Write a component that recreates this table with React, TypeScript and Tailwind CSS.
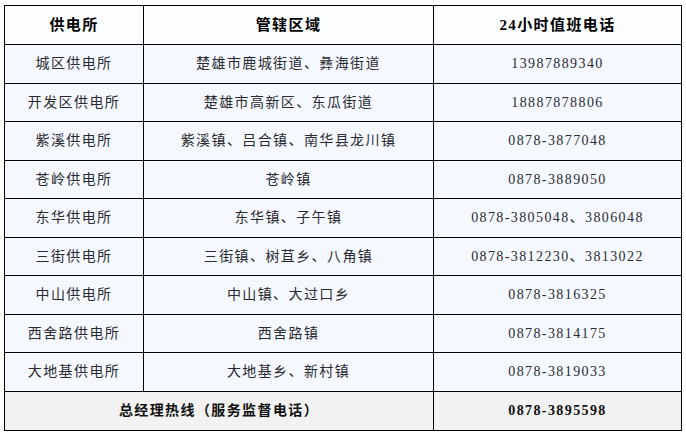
const rows = [
  ["城区供电所", "楚雄市鹿城街道、彝海街道", "13987889340"],
  ["开发区供电所", "楚雄市高新区、东瓜街道", "18887878806"],
  ["紫溪供电所", "紫溪镇、吕合镇、南华县龙川镇", "0878-3877048"],
  ["苍岭供电所", "苍岭镇", "0878-3889050"],
  ["东华供电所", "东华镇、子午镇", "0878-3805048、3806048"],
  ["三街供电所", "三街镇、树苴乡、八角镇", "0878-3812230、3813022"],
  ["中山供电所", "中山镇、大过口乡", "0878-3816325"],
  ["西舍路供电所", "西舍路镇", "0878-3814175"],
  ["大地基供电所", "大地基乡、新村镇", "0878-3819033"],
]

const font = {
  fontFamily: '"Liberation Serif", "Noto Sans CJK SC", serif',
}

const App = () => {
  return (
    <div className="w-[686px] h-[436px] bg-white pl-[4px] pt-[5px]" style={font}>
      <table className="border-collapse table-fixed w-[677px] text-center">
        <colgroup>
          <col className="w-[139px]" />
          <col className="w-[290px]" />
          <col className="w-[248px]" />
        </colgroup>
        <thead>
          {/* Header */}
          <tr className="h-[39px] bg-[#fcfdff] text-[15px] font-bold text-black tracking-[1.4px]">
            <th className="border border-black">供电所</th>
            <th className="border border-black">管辖区域</th>
            <th className="border border-black">24小时值班电话</th>
          </tr>
        </thead>
        <tbody>
          {rows.map(([station, area, phone]) => (
            <tr key={station} className="h-[38.5px] bg-[#f5f9ff] text-[14px] text-[#2a2a30] tracking-[1.4px]">
              <td className="border border-black">{station}</td>
              <td className="border border-black">{area}</td>
              <td className="border border-black">{phone}</td>
            </tr>
          ))}
          {/* Hotline */}
          <tr className="h-[39px] bg-[#f2f2f2] text-[14px] font-bold text-[#111] tracking-[1.4px]">
            <td colSpan={2} className="border border-black">总经理热线（服务监督电话）</td>
            <td className="border border-black">0878-3895598</td>
          </tr>
        </tbody>
      </table>
    </div>
  )
}

export default App
